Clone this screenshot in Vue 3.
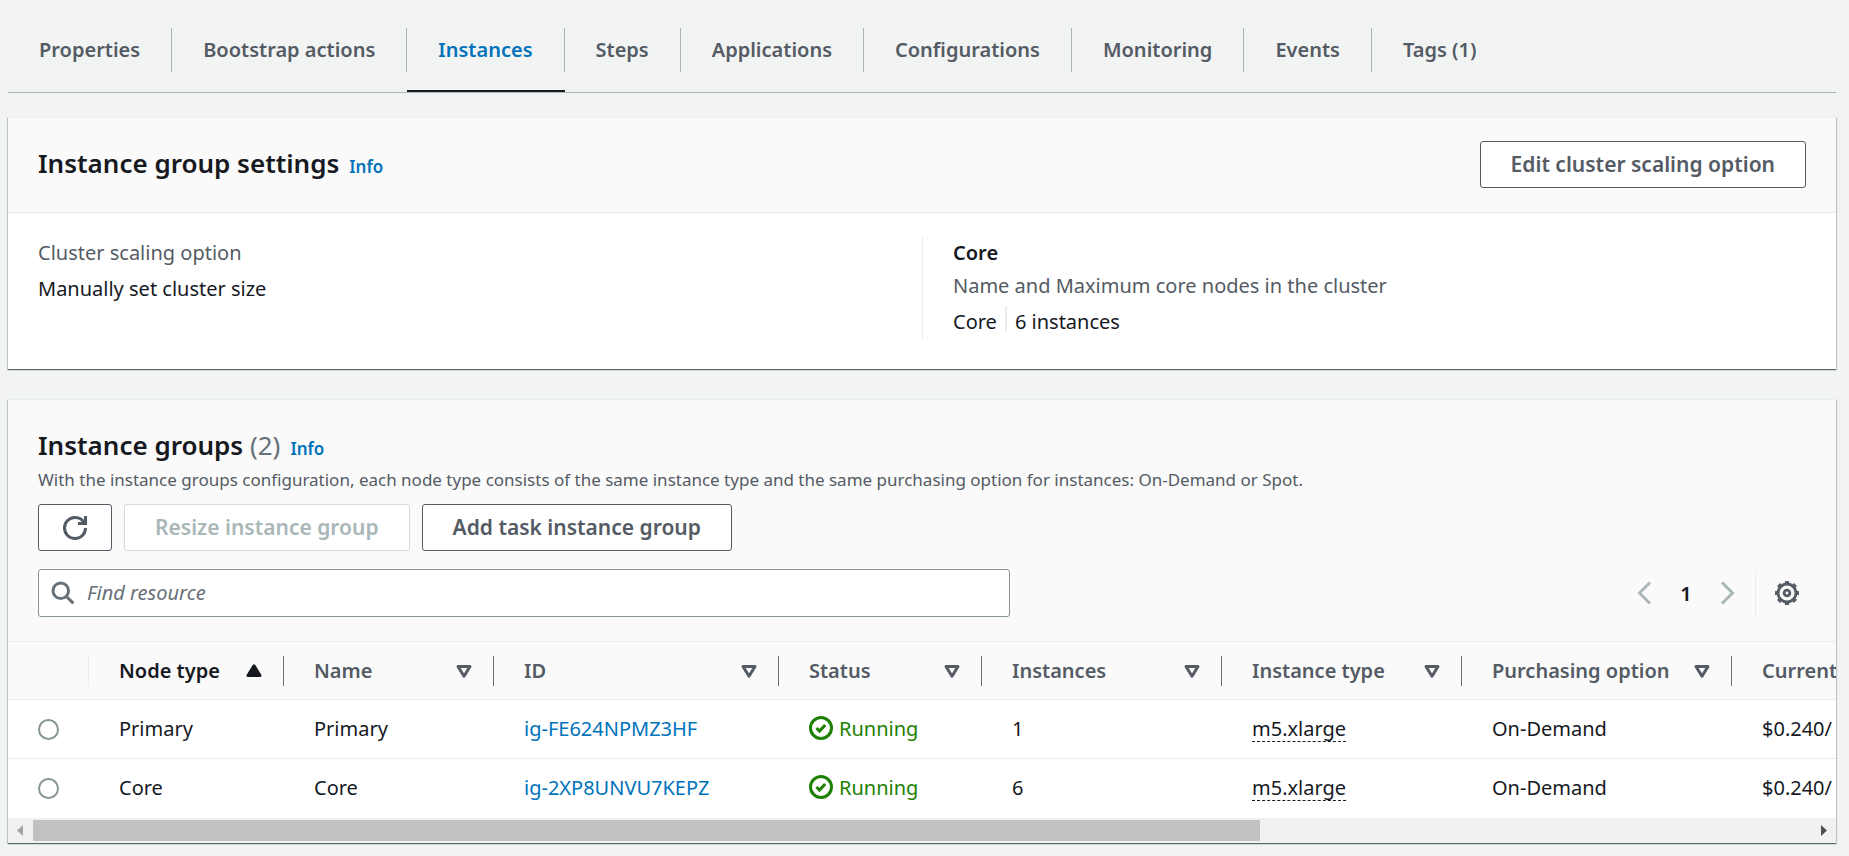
<script setup>
import { ref } from 'vue'

const tabs = ['Properties', 'Bootstrap actions', 'Instances', 'Steps', 'Applications', 'Configurations', 'Monitoring', 'Events', 'Tags (1)']
const activeTab = ref('Instances')

const columns = [
  { key: 'node', label: 'Node type', sorted: true },
  { key: 'name', label: 'Name' },
  { key: 'id', label: 'ID' },
  { key: 'status', label: 'Status' },
  { key: 'count', label: 'Instances' },
  { key: 'type', label: 'Instance type' },
  { key: 'purchase', label: 'Purchasing option' },
]

const rows = [
  { type: 'Primary', name: 'Primary', id: 'ig-FE624NPMZ3HF', count: 1 },
  { type: 'Core', name: 'Core', id: 'ig-2XP8UNVU7KEPZ', count: 6 },
]
const selected = ref('')
const query = ref('')
</script>

<template>
  <main class="page">
    <nav class="tabs" role="tablist">
      <button
        v-for="tab in tabs"
        :key="tab"
        type="button"
        role="tab"
        class="tab"
        :class="{ active: tab === activeTab }"
        :aria-selected="tab === activeTab"
        @click="activeTab = tab"
      ><span class="tab-label">{{ tab }}</span></button>
    </nav>

    <section class="card">
      <header class="card-header settings-header">
        <div class="heading">
          <h2>Instance group settings</h2>
          <a href="#" class="info">Info</a>
        </div>
        <button type="button" class="btn">Edit cluster scaling option</button>
      </header>
      <div class="settings">
        <dl class="setting">
          <dt>Cluster scaling option</dt>
          <dd>Manually set cluster size</dd>
        </dl>
        <div class="setting divided">
          <h3>Core</h3>
          <dl>
            <dt>Name and Maximum core nodes in the cluster</dt>
            <dd class="pair"><span>Core</span><span class="pair-line"></span><span>6 instances</span></dd>
          </dl>
        </div>
      </div>
    </section>

    <section class="card">
      <header class="card-header groups-header">
        <div class="heading">
          <h2>Instance groups <span class="counter">(2)</span></h2>
          <a href="#" class="info">Info</a>
        </div>
        <p class="description">With the instance groups configuration, each node type consists of the same instance type and the same purchasing option for instances: On-Demand or Spot.</p>
        <div class="actions">
          <button type="button" class="btn refresh" aria-label="Refresh">
            <svg viewBox="0 0 16 16" width="24" height="24" fill="none" stroke="currentColor" stroke-width="2">
              <path d="M10 5h5V0" />
              <path d="M15 8c0 3.900-3.100 7-7 7s-7-3.100-7-7 3.100-7 7-7c2.800 0 5.300 1.700 6.400 4.100" />
            </svg>
          </button>
          <button type="button" class="btn" disabled>Resize instance group</button>
          <button type="button" class="btn">Add task instance group</button>
        </div>
        <div class="tools">
          <label class="search">
            <svg viewBox="0 0 16 16" width="24" height="24" fill="none" stroke="currentColor" stroke-width="2" aria-hidden="true">
              <circle cx="6.500" cy="6.500" r="5.200" />
              <path d="M10.300 10.300l4.600 4.600" />
            </svg>
            <input v-model="query" type="text" placeholder="Find resource" aria-label="Find resource" />
          </label>
          <div class="paging">
            <button type="button" class="icon-btn arrow" aria-label="Previous page">
              <svg viewBox="0 0 16 16" width="24" height="24" fill="none" stroke="currentColor" stroke-width="2"><path d="M12 1L5 8l7 7" /></svg>
            </button>
            <button type="button" class="icon-btn page-number">1</button>
            <button type="button" class="icon-btn arrow" aria-label="Next page">
              <svg viewBox="0 0 16 16" width="24" height="24" fill="none" stroke="currentColor" stroke-width="2"><path d="M4 1l7 7-7 7" /></svg>
            </button>
            <div class="prefs">
              <button type="button" class="icon-btn gear" aria-label="Preferences">
                <svg viewBox="0 0 16 16" width="24" height="24" fill="none" stroke="currentColor">
                  <circle cx="8" cy="8" r="6" stroke-width="1.900" />
                  <circle cx="8" cy="8" r="7.200" stroke-width="1.600" pathLength="80" stroke-dasharray="5 5" stroke-dashoffset="2.500" />
                  <circle cx="8" cy="8" r="1.900" stroke-width="1.900" />
                </svg>
              </button>
            </div>
          </div>
        </div>
      </header>

      <div class="table-wrap">
        <table>
          <colgroup>
            <col class="col-select" />
            <col v-for="col in columns" :key="col.key" :class="'col-' + col.key" />
            <col />
          </colgroup>
          <thead>
            <tr>
              <th class="select" aria-label="Selection"></th>
              <th v-for="col in columns" :key="col.key" scope="col" :class="{ sorted: col.sorted }">
                <div class="th-inner">
                  <span>{{ col.label }}</span>
                  <svg viewBox="0 0 16 16" width="24" height="24" stroke="currentColor" stroke-width="2" stroke-linejoin="round" aria-hidden="true">
                    <path v-if="col.sorted" d="M4 11h8L8 4.500z" fill="currentColor" />
                    <path v-else d="M4 5h8l-4 6.500z" fill="none" />
                  </svg>
                </div>
              </th>
              <th scope="col" class="last"><div class="th-inner"><span>Current</span></div></th>
            </tr>
          </thead>
          <tbody>
            <tr v-for="row in rows" :key="row.id">
              <td class="select">
                <input v-model="selected" type="radio" name="group" :value="row.id" :aria-label="row.name" />
              </td>
              <td>{{ row.type }}</td>
              <td>{{ row.name }}</td>
              <td><a href="#">{{ row.id }}</a></td>
              <td>
                <span class="status">
                  <svg viewBox="0 0 16 16" width="24" height="24" fill="none" stroke="currentColor" stroke-width="2" aria-hidden="true">
                    <circle cx="8" cy="8" r="7" />
                    <path d="M5 8l2 2 3.800-4" />
                  </svg>
                  Running
                </span>
              </td>
              <td>{{ row.count }}</td>
              <td><span class="hint">m5.xlarge</span></td>
              <td>On-Demand</td>
              <td>$0.240/</td>
            </tr>
          </tbody>
        </table>
      </div>
      <div class="scrollbar" aria-hidden="true">
        <svg class="back" viewBox="0 0 25 25" width="25" height="25"><path d="M15 7v11l-6-5.500z" /></svg>
        <div class="track"><div class="thumb"></div></div>
        <svg class="forward" viewBox="0 0 25 25" width="25" height="25"><path d="M10 7v11l6-5.500z" /></svg>
      </div>
    </section>
  </main>
</template>

<style>
body {
  background: #f2f3f3;
}
</style>

<style scoped>
.page,
.page * {
  box-sizing: border-box;
}
.page {
  padding: 28px 13px 13px 8px;
  color: #16191f;
  font: 20px/33px "Noto Sans", "Open Sans", sans-serif;
  overflow: hidden;
}
h2, h3, p, dl, dt, dd {
  margin: 0;
  font-size: inherit;
}
button, input {
  font: inherit;
}
button {
  cursor: pointer;
}
svg {
  display: block;
  flex: none;
}
a {
  color: #0073bb;
  text-decoration: none;
}

.tabs {
  display: flex;
  border-bottom: 1px solid #aab7b8;
  margin-bottom: 24px;
}
.tab {
  padding: 0 0 18px;
  border: 0;
  border-bottom: 2px solid transparent;
  background: none;
  color: #545b64;
  font-weight: 600;
}
.tab-label {
  display: block;
  padding: 5px 31px 6px;
  border-right: 1px solid #aab7b8;
}
.tab:last-child .tab-label {
  border-right-color: transparent;
}
.tab.active {
  color: #0073bb;
  border-bottom-color: #16191f;
}

.card {
  margin-bottom: 30px;
  background: #fff;
  border-top: 1px solid #eaeded;
  box-shadow: 0 1px 1px 0 rgba(0, 28, 36, 0.5), 1px 1px 1px 0 rgba(0, 28, 36, 0.15), -1px 1px 1px 0 rgba(0, 28, 36, 0.15);
}
.card-header {
  background: #fafafa;
  border-bottom: 1px solid #eaeded;
}
.settings-header {
  display: flex;
  justify-content: space-between;
  align-items: center;
  padding: 23px 30px 24px;
}
.heading {
  display: flex;
  align-items: baseline;
  gap: 10px;
}
.settings-header .heading {
  padding-bottom: 2px;
}
h2 {
  font-size: 26px;
  font-weight: 600;
  line-height: 36px;
}
.counter {
  color: #687078;
  font-weight: 400;
}
.info {
  font-size: 17px;
  font-weight: 600;
}
.btn {
  height: 47px;
  padding: 0 30px;
  border: 1px solid #545b64;
  border-radius: 3px;
  background: #fff;
  color: #545b64;
  font-size: 21px;
  font-weight: 600;
}
.btn:disabled {
  color: #aab7b8;
  border-color: #d5dbdb;
}
.refresh {
  padding: 0 24px;
}

.settings {
  display: grid;
  grid-template-columns: 1fr 1fr;
  padding: 24px 0 30px;
  line-height: 31px;
}
.setting {
  padding: 0 30px 2px;
}
.divided {
  border-left: 1px solid #eaeded;
}
h3 {
  margin-bottom: 2px;
  font-weight: 600;
}
dt {
  color: #545b64;
}
dd {
  margin-top: 5px;
}
.pair {
  display: flex;
  gap: 8px;
}
.pair-line {
  width: 2px;
  height: 25px;
  background: #eaeded;
}

.groups-header {
  padding: 27px 30px 24px;
}
.description {
  margin-top: 1px;
  color: #545b64;
  font-size: 17px;
  line-height: 28px;
}
.actions {
  display: flex;
  gap: 12px;
  margin: 10px 0 18px;
}
.tools {
  display: flex;
  justify-content: space-between;
  align-items: center;
}
.search {
  display: flex;
  align-items: center;
  gap: 12px;
  width: 55%;
  height: 48px;
  padding: 0 12px;
  border: 1px solid #879596;
  border-radius: 3px;
  background: #fff;
  color: #687078;
}
.search input {
  flex: 1;
  min-width: 0;
  padding: 0 0 2px;
  border: 0;
  outline: 0;
  background: none;
  color: #16191f;
}
.search input::placeholder {
  color: #687078;
  font-style: italic;
  opacity: 1;
}
.paging {
  display: flex;
  align-items: center;
}
.icon-btn {
  padding: 0;
  border: 0;
  background: none;
  color: #545b64;
}
.arrow {
  color: #aab7b8;
}
.page-number {
  width: 60px;
  color: #16191f;
  font-weight: 600;
}
.prefs {
  display: flex;
  align-items: center;
  height: 47px;
  margin-left: 15px;
  padding: 0 7px 0 19px;
  border-left: 1px solid #eaeded;
}

.table-wrap {
  overflow: hidden;
}
table {
  width: 2653px;
  table-layout: fixed;
  border-collapse: separate;
  border-spacing: 0;
}
.col-select { width: 81px; }
.col-node { width: 195px; }
.col-name { width: 210px; }
.col-id { width: 285px; }
.col-status { width: 203px; }
.col-count { width: 240px; }
.col-type { width: 240px; }
.col-purchase { width: 270px; }
th {
  height: 58px;
  padding: 0;
  background: #fafafa;
  border-bottom: 1px solid #eaeded;
  color: #545b64;
  font-weight: 600;
  text-align: left;
}
.th-inner {
  display: flex;
  justify-content: space-between;
  align-items: center;
  height: 30px;
  padding: 0 17px 0 30px;
  border-right: 1px solid #687078;
  white-space: nowrap;
}
th.select {
  background: linear-gradient(#eaeded, #eaeded) right center / 1px 30px no-repeat #fafafa;
}
th.sorted {
  color: #16191f;
}
.last .th-inner {
  border-right: 0;
}
td {
  height: 59px;
  padding: 0 30px 2px;
  border-bottom: 1px solid #eaeded;
  white-space: nowrap;
}
tbody tr:last-child td {
  border-bottom-color: transparent;
}
td.select {
  padding: 0 0 0 30px;
}
td input {
  display: block;
  appearance: none;
  width: 21px;
  height: 21px;
  margin: 0;
  border: 2px solid #879596;
  border-radius: 50%;
  background: #fff;
}
td input:checked {
  border: 6px solid #0073bb;
}
.status {
  display: flex;
  align-items: center;
  gap: 6px;
  color: #1d8102;
}
.hint {
  display: inline-block;
  line-height: 25px;
  border-bottom: 1px dashed #16191f;
}

.scrollbar {
  display: flex;
  height: 25px;
  background: #f1f1f1;
}
.track {
  flex: 1;
  padding: 2px 0;
}
.thumb {
  width: 69%;
  height: 21px;
  background: #c1c1c1;
}
.back {
  fill: #a3a3a3;
}
.forward {
  fill: #505050;
}
</style>
